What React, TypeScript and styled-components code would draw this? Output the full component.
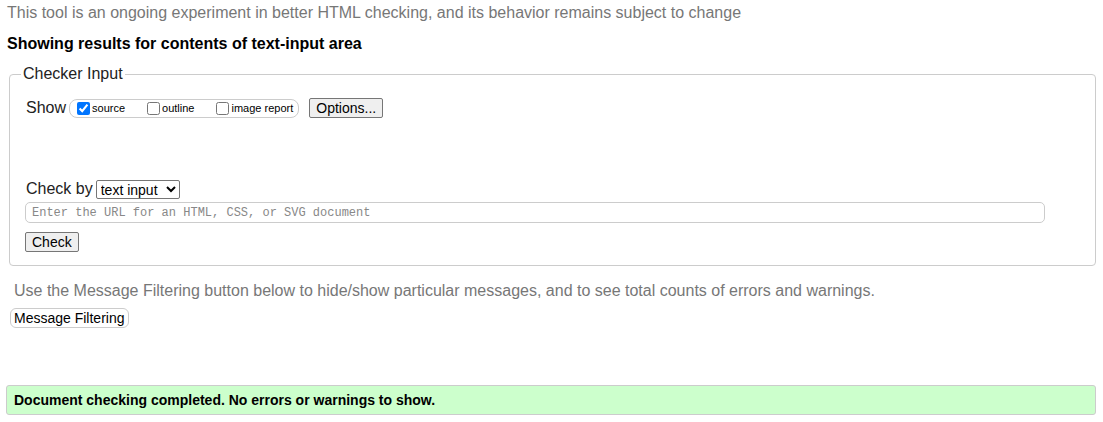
import styled, { createGlobalStyle } from 'styled-components';

const GlobalStyle = createGlobalStyle`
  body {
    margin: 0;
    background: #fff;
    font-family: 'Liberation Sans', Arial, sans-serif;
    color: #000;
  }
`;

const Page = styled.div`
  padding: 4px 7px 0 7px;
`;

const Intro = styled.p`
  margin: 0;
  font-size: 16px;
  line-height: 18px;
  color: #777;
`;

const Heading = styled.h2`
  margin: 13px 0 0 0;
  font-size: 16px;
  line-height: 18px;
  font-weight: bold;
  color: #000;
`;

const Fieldset = styled.fieldset`
  margin: 12px 0 0 2px;
  padding: 0 16px 13px 15px;
  border: 1px solid #ccc;
  border-radius: 4px;
`;

const Legend = styled.legend`
  margin-left: -4px;
  padding: 0 2px;
  font-size: 16px;
  line-height: 18px;
  color: #222;
`;

const Row = styled.div<{ $top?: number }>`
  display: flex;
  align-items: center;
  margin-top: ${(p) => p.$top ?? 0}px;
`;

const Label = styled.span`
  font-size: 16px;
  line-height: 20px;
  color: #222;
  margin: 0 3px 0 1px;
`;

const ShowGroup = styled.span`
  display: inline-flex;
  align-items: center;
  height: 17px;
  padding: 0 5px 0 3px;
  border: 1px solid #ccc;
  border-radius: 8px;
`;

const CheckLabel = styled.label`
  display: inline-flex;
  align-items: center;
  font-size: 11px;
  margin-right: 18px;

  &:last-child {
    margin-right: 0;
  }

  input {
    margin: 0 2px 0 4px;
    width: 13px;
    height: 13px;
  }
`;

const NativeButton = styled.button<{ $rounded?: boolean }>`
  font-family: 'Liberation Sans', Arial, sans-serif;
  font-size: 14px;
  line-height: 16px;
  height: 20px;
  padding: 0 ${(p) => (p.$rounded ? 3 : 6)}px;
  color: #000;
  background: ${(p) => (p.$rounded ? '#fff' : '#efefef')};
  border: 1px solid ${(p) => (p.$rounded ? '#ccc' : '#767676')};
  border-radius: ${(p) => (p.$rounded ? 6 : 2)}px;
`;

const OptionsButton = styled(NativeButton)`
  margin-left: 10px;
`;

const Select = styled.select`
  font-family: 'Liberation Sans', Arial, sans-serif;
  font-size: 14px;
  width: 84px;
  height: 19px;
  padding: 0;
  border: 1px solid #767676;
  border-radius: 2px;
  color: #000;
  background: #fff;
`;

const UrlInput = styled.input`
  display: block;
  box-sizing: border-box;
  width: 1020px;
  height: 21px;
  margin-top: 3px;
  padding: 0 6px;
  font-family: 'Liberation Mono', 'DejaVu Sans Mono', monospace;
  font-size: 12px;
  border: 1px solid #ccc;
  border-radius: 5px;

  &::placeholder {
    color: #888;
  }
`;

const CheckButton = styled(NativeButton)`
  display: block;
  margin-top: 9px;
`;

const Note = styled.p`
  margin: 16px 0 0 7px;
  font-size: 16px;
  line-height: 18px;
  color: #777;
`;

const FilterButton = styled(NativeButton)`
  display: block;
  margin: 8px 0 0 3px;
`;

const Success = styled.div`
  margin: 57px 0 0 -1px;
  height: 30px;
  box-sizing: border-box;
  padding: 0 7px;
  display: flex;
  align-items: center;
  background: #ccffcc;
  border: 1px solid #ccc;
  border-radius: 3px;
  font-size: 14px;
  font-weight: bold;
  color: #000;
`;

export default function App() {
  return (
    <>
      <GlobalStyle />
      <Page>
        <Intro>
          This tool is an ongoing experiment in better HTML checking, and its behavior remains
          subject to change
        </Intro>
        <Heading>Showing results for contents of text-input area</Heading>
        <Fieldset>
          <Legend>Checker Input</Legend>
          <Row $top={15}>
            <Label>Show</Label>
            <ShowGroup>
              <CheckLabel>
                <input type="checkbox" defaultChecked />
                source
              </CheckLabel>
              <CheckLabel>
                <input type="checkbox" />
                outline
              </CheckLabel>
              <CheckLabel>
                <input type="checkbox" />
                image report
              </CheckLabel>
            </ShowGroup>
            <OptionsButton>Options...</OptionsButton>
          </Row>
          <Row $top={61}>
            <Label>Check by</Label>
            <Select defaultValue="text">
              <option value="address">address</option>
              <option value="file">file upload</option>
              <option value="text">text input</option>
            </Select>
          </Row>
          <UrlInput placeholder="Enter the URL for an HTML, CSS, or SVG document" />
          <CheckButton>Check</CheckButton>
        </Fieldset>
        <Note>
          Use the Message Filtering button below to hide/show particular messages, and to see total
          counts of errors and warnings.
        </Note>
        <FilterButton $rounded>Message Filtering</FilterButton>
        <Success>Document checking completed. No errors or warnings to show.</Success>
      </Page>
    </>
  );
}
